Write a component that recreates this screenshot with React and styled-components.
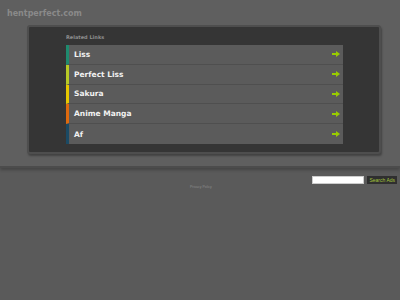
import React from 'react';
import styled, { createGlobalStyle } from 'styled-components';

const links = [
  { name: 'Liss', color: '#1f8a6e' },
  { name: 'Perfect Liss', color: '#b7c926' },
  { name: 'Sakura', color: '#e6c700' },
  { name: 'Anime Manga', color: '#de6a0e' },
  { name: 'Af', color: '#1b4a64' },
];

const GlobalStyle = createGlobalStyle`
  html, body {
    margin: 0;
    padding: 0;
    background: #5a5a5a;
    font-family: "DejaVu Sans", Verdana, sans-serif;
  }
`;

const Arrow = () => (
  <svg width="8" height="6" viewBox="0 0 8 6">
    <path d="M0 2h4V0l4 3-4 3V4H0z" fill="#99cc00" />
  </svg>
);

const App = () => {
  return (
    <Page>
      <GlobalStyle />
      <Top>
        <Domain>hentperfect.com</Domain>
        <Panel>
          <Label>Related Links</Label>
          <List>
            {links.map((l) => (
              <Row key={l.name} $stripe={l.color}>
                <span>{l.name}</span>
                <Arrow />
              </Row>
            ))}
          </List>
        </Panel>
      </Top>
      <Bottom>
        <SearchBar>
          <SearchInput />
          <SearchBtn>Search Ads</SearchBtn>
        </SearchBar>
        <Privacy>Privacy Policy</Privacy>
      </Bottom>
    </Page>
  );
};

const Page = styled.div`
  width: 400px;
  height: 300px;
  overflow: hidden;
`;

const Top = styled.div`
  background: #5f5f5f;
  height: 168px;
  padding-top: 9px;
  box-sizing: border-box;
  border-bottom: 2px solid #4c4c4c;
  box-shadow: 0 2px 3px rgba(0, 0, 0, 0.25);
`;

const Domain = styled.div`
  margin-left: 7px;
  font-size: 8px;
  font-weight: bold;
  color: #8a8a8a;
  line-height: 9px;
`;

const Panel = styled.div`
  margin: 7px 0 0 27px;
  width: 354px;
  height: 129px;
  box-sizing: border-box;
  background: #353535;
  border: 2px solid #4e4e4e;
  border-radius: 3px;
  box-shadow: 1px 2px 2px rgba(0, 0, 0, 0.3);
  padding: 7px 0 0 37px;
`;

const Label = styled.div`
  font-size: 5px;
  font-weight: bold;
  color: #8e8e8e;
  line-height: 7px;
`;

const List = styled.div`
  margin-top: 4px;
  width: 277px;
  display: flex;
  flex-direction: column;
`;

const Row = styled.div`
  height: 19.8px;
  box-sizing: border-box;
  display: flex;
  align-items: center;
  justify-content: space-between;
  padding: 0 3px 0 5px;
  background: #5b5b5b;
  border-left: 3px solid ${(p) => p.$stripe};
  border-bottom: 1px solid #4f4f4f;
  font-size: 7.5px;
  font-weight: bold;
  color: #f2f2f2;

  &:last-child {
    border-bottom: none;
  }
`;

const Bottom = styled.div`
  display: flex;
  flex-direction: column;
  padding-top: 8px;
`;

const SearchBar = styled.div`
  display: flex;
  justify-content: flex-end;
  align-items: center;
  gap: 3px;
  padding-right: 3px;
`;

const SearchInput = styled.div`
  width: 50px;
  height: 6px;
  background: #fff;
  border: 1px solid #ccc;
  box-sizing: content-box;
`;

const SearchBtn = styled.div`
  height: 8px;
  padding: 0 2px;
  background: #2f2f2f;
  color: #a4c43c;
  font-size: 5px;
  line-height: 8px;
  font-family: "Liberation Sans", Arial, sans-serif;
`;

const Privacy = styled.div`
  margin: 1px 0 0 190px;
  font-size: 3.5px;
  color: #8a8a8a;
  font-family: "Liberation Sans", Arial, sans-serif;
`;

export default App;
